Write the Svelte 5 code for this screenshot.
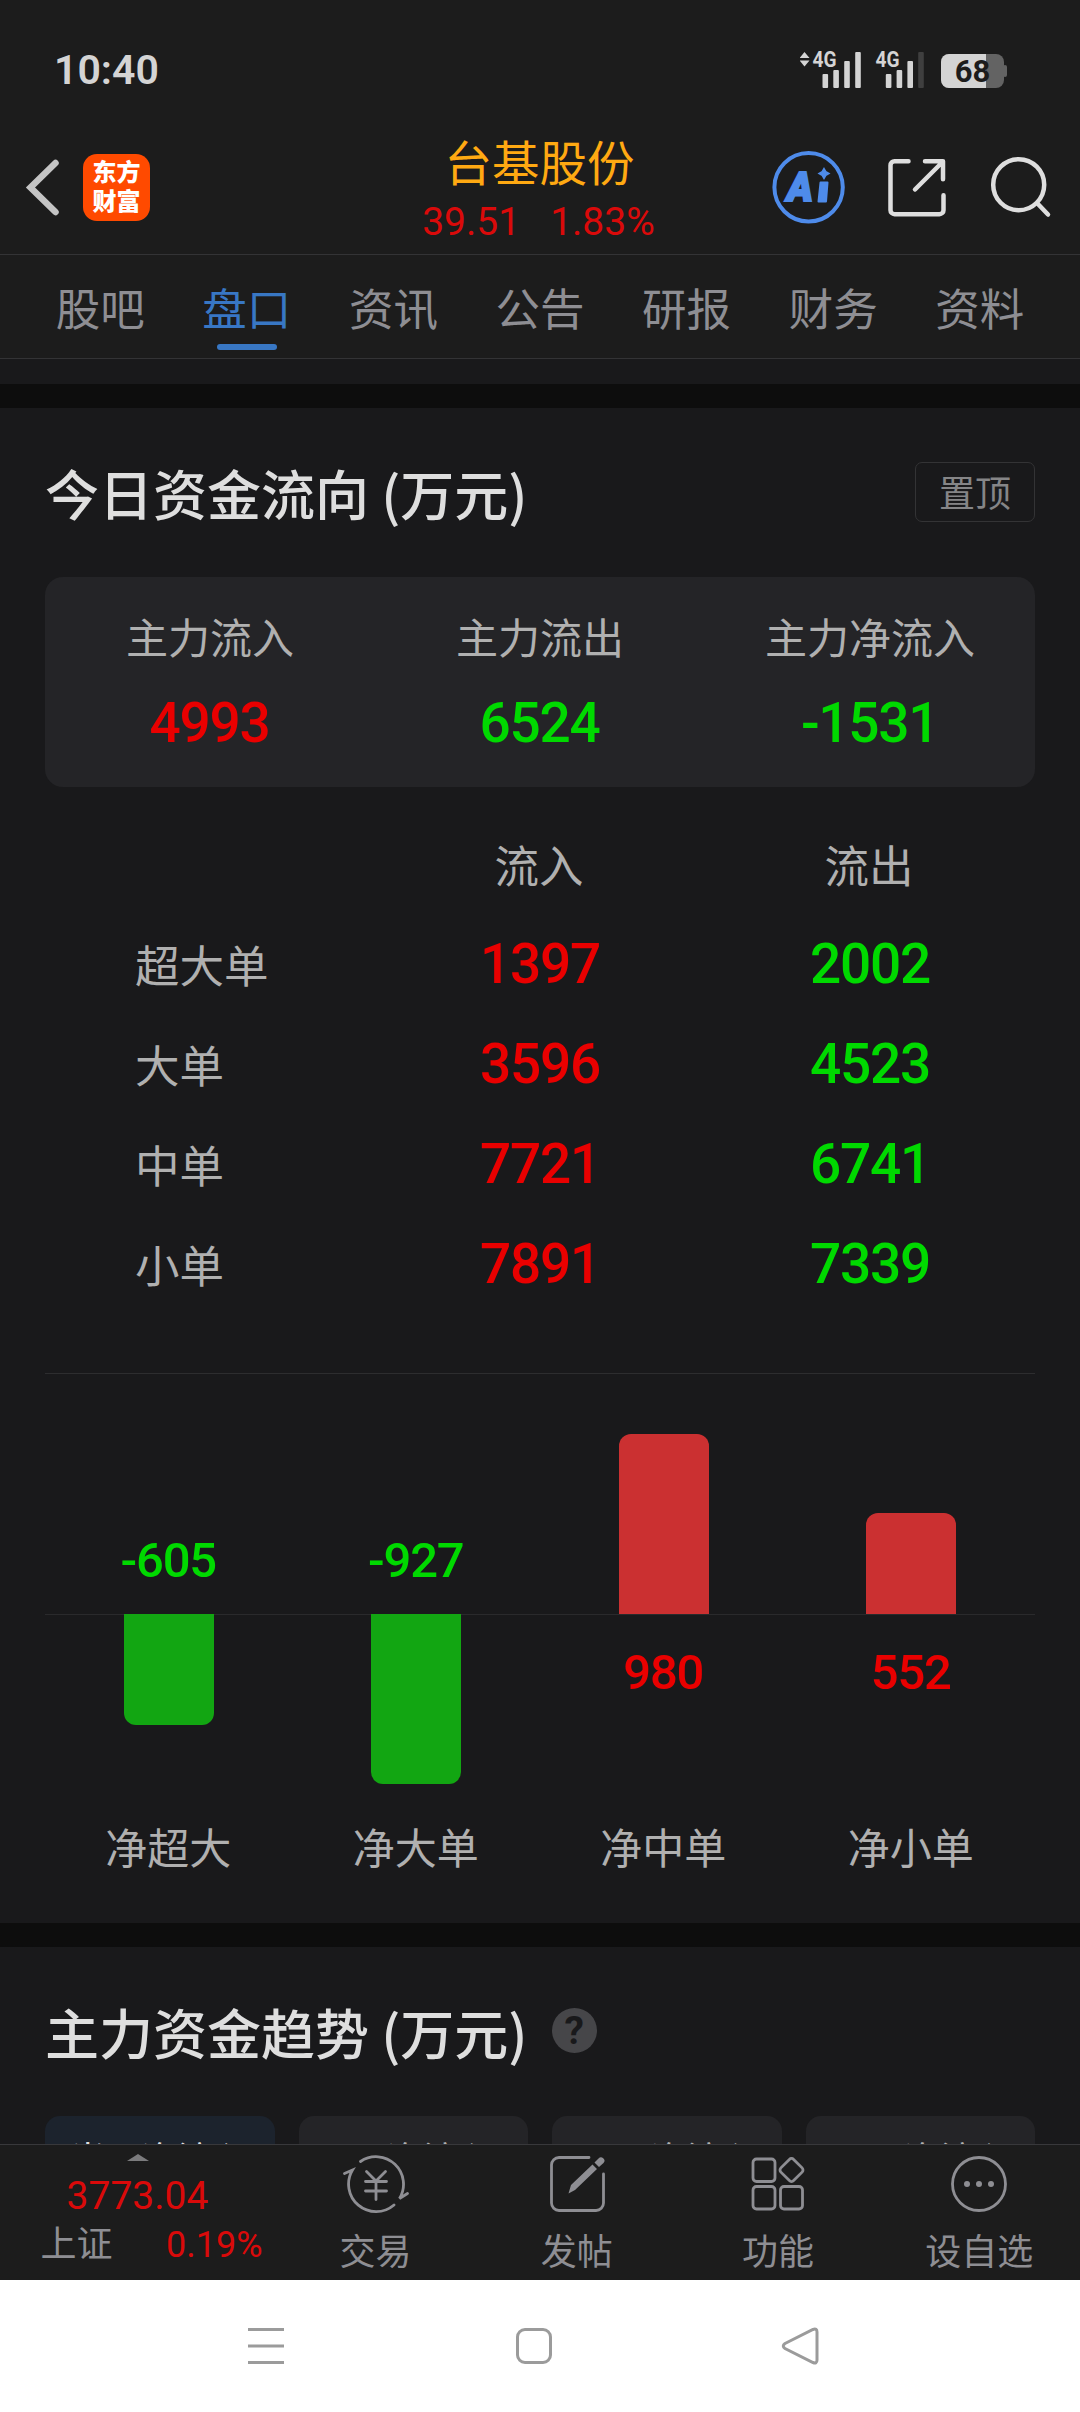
<script lang="ts">
	const tabs = ['股吧', '盘口', '资讯', '公告', '研报', '财务', '资料'];
	let active = $state('盘口');

	const summary = [
		{ label: '主力流入', value: 4993, tone: 'up' },
		{ label: '主力流出', value: 6524, tone: 'down' },
		{ label: '主力净流入', value: -1531, tone: 'down' }
	];

	const orders = [
		{ label: '超大单', inflow: 1397, outflow: 2002 },
		{ label: '大单', inflow: 3596, outflow: 4523 },
		{ label: '中单', inflow: 7721, outflow: 6741 },
		{ label: '小单', inflow: 7891, outflow: 7339 }
	];

	const net = [
		{ label: '净超大', value: -605 },
		{ label: '净大单', value: -927 },
		{ label: '净中单', value: 980 },
		{ label: '净小单', value: 552 }
	];
	const maxNet = Math.max(...net.map((n) => Math.abs(n.value)));
	const barHeight = (v: number) => (Math.abs(v) / maxNet) * 180;

	const ranges = ['当日净流入', '5日净流入', '10日净流入', '20日净流入'];
	let range = $state(0);
</script>

<div class="screen">
	<div class="status">
		<span class="time">10:40</span>
		<svg class="status-icons" width="210" height="52" viewBox="800 44 210 52">
			<g fill="#d4d4d4">
				<path d="M804.5 52l5 6h-10zM804.5 66.500l5-6h-10z" />
				<text class="net-type" x="812.500" y="66.500" textLength="24" lengthAdjust="spacingAndGlyphs">4G</text>
				<rect x="822.500" y="74" width="5.600" height="14" rx="1" />
				<rect x="833.300" y="70" width="5.600" height="18" rx="1" />
				<rect x="844.200" y="61" width="5.600" height="27" rx="1" />
				<rect x="855.200" y="52" width="5.600" height="36" rx="1" />
				<text class="net-type" x="875.500" y="66.500" textLength="24" lengthAdjust="spacingAndGlyphs">4G</text>
				<rect x="885.800" y="74" width="5.600" height="14" rx="1" />
				<rect x="896.600" y="70" width="5.600" height="18" rx="1" />
				<rect x="907.400" y="61" width="5.600" height="27" rx="1" />
				<rect x="918.200" y="52" width="5.600" height="36" rx="1" fill="#3f3f3f" />
			</g>
			<rect x="941" y="54" width="63" height="34" rx="8" fill="#636363" />
			<rect x="1003" y="65" width="4" height="12" rx="2" fill="#636363" />
			<path d="M949 54h37v34h-37a8 8 0 0 1-8-8v-18a8 8 0 0 1 8-8z" fill="#d4d4d4" />
			<text class="battery" x="972.500" y="82" text-anchor="middle">68</text>
		</svg>
	</div>

	<header>
		<div class="left">
			<svg width="36" height="60" viewBox="0 0 36 60">
				<path d="M30.500 6L5.500 30.500l25 24.500" fill="none" stroke="#c4c4c4" stroke-width="6.500" stroke-linecap="round" />
			</svg>
			<div class="logo"><span>东方</span><span>财富</span></div>
		</div>
		<div class="stock">
			<h1>台基股份</h1>
			<p class="quote"><span>39.51</span><span>1.83%</span></p>
		</div>
		<svg class="actions" width="284" height="76" viewBox="770 149 284 76" fill="none">
			<circle cx="808.600" cy="187.300" r="34.200" stroke="#4e8bea" stroke-width="4" />
			<text class="ai" x="787" y="200.500" textLength="26" lengthAdjust="spacingAndGlyphs">A</text>
			<path d="M820.500 182.500h7l-1.500 19h-7.500z" fill="#4e8bea" stroke="#4e8bea" stroke-width="2" stroke-linejoin="round" />
			<path d="M824 168.500l1.800 3.200 3.200 1.800-3.200 1.800-1.800 3.200-1.800-3.200-3.200-1.800 3.200-1.800z" fill="#4e8bea" stroke="#4e8bea" stroke-width="1.500" />
			<g stroke="#dedede" stroke-width="4.500" stroke-linecap="round" stroke-linejoin="round">
				<path d="M908.500 161.200h-14a4 4 0 0 0-4 4v45a4 4 0 0 0 4 4h45a4 4 0 0 0 4-4v-15M925 161.200h18v18M942.500 162l-27.500 27.500" />
				<circle cx="1018.700" cy="184.700" r="25.500" />
				<path d="M1037.500 203.500l10.500 11" />
			</g>
		</svg>
	</header>

	<nav class="tabs">
		{#each tabs as tab}
			<button class:active={tab === active} onclick={() => (active = tab)}>{tab}</button>
		{/each}
	</nav>

	<main>
		<section class="flow">
			<div class="title">
				<h2>今日资金流向 (万元)</h2>
				<button class="pin">置顶</button>
			</div>

			<div class="card">
				{#each summary as item}
					<div class="cell">
						<span class="label">{item.label}</span>
						<span class="num {item.tone}">{item.value}</span>
					</div>
				{/each}
			</div>

			<div class="table">
				<div class="row head">
					<span></span>
					<span>流入</span>
					<span>流出</span>
				</div>
				{#each orders as o}
					<div class="row">
						<span class="name">{o.label}</span>
						<span class="num up">{o.inflow}</span>
						<span class="num down">{o.outflow}</span>
					</div>
				{/each}
			</div>

			<div class="chart">
				{#each net as n}
					<div class="col">
						<div class="half top">
							{#if n.value > 0}
								<div class="bar pos" style="height: {barHeight(n.value)}px"></div>
							{:else}
								<span class="val down">{n.value}</span>
							{/if}
						</div>
						<div class="half bottom">
							{#if n.value > 0}
								<span class="val up">{n.value}</span>
							{:else}
								<div class="bar neg" style="height: {barHeight(n.value)}px"></div>
							{/if}
						</div>
						<span class="cap">{n.label}</span>
					</div>
				{/each}
			</div>
		</section>

		<section class="trend">
			<div class="title">
				<h2>主力资金趋势 (万元)</h2>
				<span class="help">?</span>
			</div>
			<div class="ranges">
				{#each ranges as r, i}
					<button class:on={i === range} onclick={() => (range = i)}>{r}</button>
				{/each}
			</div>
		</section>
	</main>

	<footer>
		<div class="index">
			<svg width="22" height="7" viewBox="0 0 22 7"><path d="M0 7L11 0l11 7z" fill="#7b7b7d" /></svg>
			<span class="points">3773.04</span>
			<div class="market"><span>上证</span><span class="pct">0.19%</span></div>
		</div>
		<div class="item">
			<svg width="66" height="62" viewBox="0 0 66 62">
				<path d="M17.500 8.500A27.500 27.500 0 0 1 56.500 45.500l8-5M51 52A27.500 27.500 0 0 1 9.500 17l-8 3.500" />
				<path d="M23.500 18.500L33 28l9.500-9.500M22.500 28.500h21M22.500 38h21M33 28.500v18" />
			</svg>
			<span>交易</span>
		</div>
		<div class="item">
			<svg width="66" height="62" viewBox="0 0 66 62">
				<path d="M45 4.500H15a7.500 7.500 0 0 0-7.500 7.500v38a7.500 7.500 0 0 0 7.500 7.500h37a7.500 7.500 0 0 0 7.500-7.500V21" />
				<path class="solid" d="M24.500 40.500l2.500-8.500L48.500 11.500l4.500 4.500-22 21zM50.500 9.500l4-4a3.200 3.200 0 0 1 5 4.500l-4.500 4z" />
			</svg>
			<span>发帖</span>
		</div>
		<div class="item">
			<svg width="66" height="62" viewBox="0 0 66 62">
				<rect x="8" y="6" width="22" height="22.500" rx="3.500" />
				<rect x="8" y="33.500" width="22" height="22.500" rx="3.500" />
				<rect x="35.500" y="33.500" width="22" height="22.500" rx="3.500" />
				<rect x="37.500" y="8" width="18" height="18" rx="3" transform="rotate(45 46.500 17)" />
			</svg>
			<span>功能</span>
		</div>
		<div class="item">
			<svg width="66" height="62" viewBox="0 0 66 62">
				<circle cx="33" cy="31" r="26.500" />
				<circle class="solid" cx="21" cy="31" r="3" />
				<circle class="solid" cx="33" cy="31" r="3" />
				<circle class="solid" cx="45" cy="31" r="3" />
			</svg>
			<span>设自选</span>
		</div>
	</footer>

	<div class="sysnav">
		<svg width="40" height="40" viewBox="0 0 40 40"><path d="M2 3.500h36M2 20h36M2 36.500h36" /></svg>
		<svg width="40" height="40" viewBox="0 0 40 40"><rect x="3.500" y="3.500" width="33" height="33" rx="7.500" /></svg>
		<svg width="40" height="40" viewBox="0 0 40 40"><path d="M4 17.500L32 3.500q4-1.500 4 2.500v28q0 4-4 2.500L4 22.500q-3.500-2.500 0-5z" /></svg>
	</div>
</div>

<style>
	:global(body) {
		background: #1c1c1c;
	}
	.screen {
		display: flex;
		flex-direction: column;
		width: 1080px;
		height: 2412px;
		overflow: hidden;
		background: #1c1c1c;
		color: #b0b0b0;
		font-family: Roboto, 'Noto Sans CJK SC', sans-serif;
	}
	h1,
	h2,
	p {
		margin: 0;
		font-weight: 400;
	}
	button {
		padding: 0;
		border: 0;
		background: none;
		color: inherit;
		font: inherit;
	}
	svg {
		display: block;
		flex: none;
	}
	.up {
		color: #e90000;
	}
	.down {
		color: #00d900;
	}

	.status {
		display: flex;
		justify-content: space-between;
		align-items: center;
		height: 120px;
		padding: 20px 70px 0 54px;
		box-sizing: border-box;
	}
	.time {
		font-size: 41px;
		font-weight: 600;
		color: #d4d4d4;
	}
	.net-type {
		font-size: 21.500px;
		font-weight: 700;
	}
	.battery {
		font-size: 31px;
		font-weight: 700;
		fill: #1c1c1c;
	}

	header {
		display: grid;
		grid-template-columns: 1fr 300px 1fr;
		align-items: center;
		height: 134px;
		border-bottom: 1px solid #333335;
	}
	.left {
		display: flex;
		align-items: center;
		gap: 22px;
		padding-left: 25px;
	}
	.logo {
		display: flex;
		flex-direction: column;
		justify-content: center;
		align-items: center;
		width: 67px;
		height: 67px;
		margin-top: 1px;
		border-radius: 14px;
		background: #ff4a00;
		color: #fff;
		font-size: 24px;
		font-weight: 900;
		line-height: 29px;
	}
	.stock {
		padding-top: 10px;
		text-align: center;
	}
	h1 {
		margin-right: 1px;
		color: #ffa912;
		font-size: 47.500px;
		line-height: 60px;
	}
	.quote {
		display: flex;
		justify-content: center;
		gap: 30px;
		margin-right: 3px;
		color: #da0a0a;
		font-size: 39px;
		line-height: 54px;
	}
	.actions {
		justify-self: end;
		margin-right: 26px;
	}
	.ai {
		fill: #4e8bea;
		stroke: #4e8bea;
		stroke-width: 2px;
		font-size: 41px;
		font-weight: 900;
		font-style: italic;
	}

	.tabs {
		display: grid;
		grid-template-columns: repeat(7, 1fr);
		height: 103px;
		padding: 0 27px;
		border-bottom: 1px solid #333335;
		color: #8e8e93;
		font-size: 44.500px;
	}
	.tabs button {
		display: flex;
		flex-direction: column;
		align-items: center;
		padding-top: 23px;
		line-height: 66px;
	}
	.tabs .active {
		color: #3877c4;
	}
	.tabs .active::after {
		content: '';
		width: 60px;
		height: 6px;
		border-radius: 3px;
		background: #3877c4;
	}

	main {
		flex: 1;
		min-height: 0;
		overflow: hidden;
		padding-top: 25px;
		background: #19191b;
	}
	section {
		padding: 0 45px;
		border-top: 24px solid #0d0d0d;
	}
	.title {
		display: flex;
		align-items: center;
		height: 169px;
	}
	h2 {
		color: #dedede;
		font-family: 'Noto Sans CJK SC', sans-serif;
		font-size: 54px;
		font-weight: 500;
		line-height: 80px;
	}
	.pin {
		width: 120px;
		height: 60px;
		margin: 0 0 1px auto;
		padding-bottom: 2px;
		border: 1px solid #333335;
		border-radius: 7px;
		color: #858587;
		font-size: 36px;
	}

	.card {
		display: grid;
		grid-template-columns: repeat(3, 1fr);
		height: 210px;
		border-radius: 18px;
		background: #242427;
	}
	.cell {
		display: flex;
		flex-direction: column;
		align-items: center;
		padding-top: 31px;
	}
	.label {
		font-size: 42px;
		line-height: 64px;
	}
	.num {
		font-size: 55px;
		font-weight: 500;
		letter-spacing: -1.300px;
	}
	.cell .num {
		margin-right: 1px;
		line-height: 102px;
	}

	.table {
		padding: 29px 0 57px;
		border-bottom: 1px solid #2d2d2f;
		font-size: 44.500px;
	}
	.row {
		display: grid;
		grid-template-columns: repeat(3, 1fr);
		height: 100px;
		line-height: 96px;
		text-align: center;
	}
	.head {
		line-height: 104px;
	}
	.head span {
		margin-right: 2px;
	}
	.name {
		padding: 4px 0 0 90px;
		text-align: left;
	}

	.chart {
		display: grid;
		grid-template-columns: repeat(4, 1fr);
		height: 549px;
		padding-top: 60px;
		box-sizing: border-box;
	}
	.col {
		display: flex;
		flex-direction: column;
		align-items: center;
	}
	.half {
		display: flex;
		flex-direction: column;
		align-items: center;
		width: 100%;
		height: 180px;
	}
	.top {
		justify-content: flex-end;
		box-shadow: 0 1px #2a2a2c;
	}
	.bar {
		width: 90px;
	}
	.pos {
		border-radius: 12px 12px 0 0;
		background: #cb3031;
	}
	.neg {
		z-index: 1;
		border-radius: 0 0 12px 12px;
		background: #12a612;
	}
	.val {
		margin-right: 1px;
		font-size: 49px;
		font-weight: 500;
		letter-spacing: -1.200px;
		line-height: 56px;
	}
	.top .val {
		padding-bottom: 25px;
	}
	.bottom .val {
		padding-top: 31px;
	}
	.cap {
		margin-right: 1px;
		padding-top: 25px;
		font-size: 42px;
		line-height: 62px;
	}

	.help {
		width: 45px;
		height: 45px;
		margin: 0 0 2px 24px;
		border-radius: 50%;
		background: #464649;
		color: #19191b;
		font-size: 39px;
		font-weight: 700;
		line-height: 46px;
		text-align: center;
	}
	.ranges {
		display: grid;
		grid-template-columns: repeat(4, 1fr);
		gap: 24px;
	}
	.ranges button {
		height: 84px;
		padding-bottom: 3px;
		border-radius: 15px;
		background: #242427;
		font-size: 36px;
	}
	.ranges .on {
		background: #1c232d;
		color: #dedede;
	}

	footer {
		display: grid;
		grid-template-columns: 275px repeat(4, 1fr);
		height: 135px;
		border-top: 1px solid #38383b;
		color: #8e8e93;
		font-size: 36px;
	}
	.index {
		display: flex;
		flex-direction: column;
		align-items: center;
		padding-top: 9px;
	}
	.points {
		margin-top: 11px;
		color: #da0a0a;
		font-size: 39px;
		line-height: 48px;
	}
	.market {
		display: flex;
		justify-content: space-between;
		width: 222px;
		margin-left: 28px;
		line-height: 51px;
	}
	.pct {
		color: #da0a0a;
	}
	.item {
		display: flex;
		flex-direction: column;
		align-items: center;
		padding-top: 8px;
	}
	.item svg {
		fill: none;
		stroke: #8e8e93;
		stroke-width: 2.800;
		stroke-linecap: round;
	}
	.item .solid {
		fill: #8e8e93;
		stroke: none;
	}
	.item span {
		margin-top: 11px;
		line-height: 54px;
	}

	.sysnav {
		display: flex;
		gap: 227.500px;
		height: 132px;
		padding: 46px 0 0 246px;
		box-sizing: border-box;
		background: #fff;
	}
	.sysnav svg {
		fill: none;
		stroke: #9b9b9b;
		stroke-width: 3;
	}
</style>
